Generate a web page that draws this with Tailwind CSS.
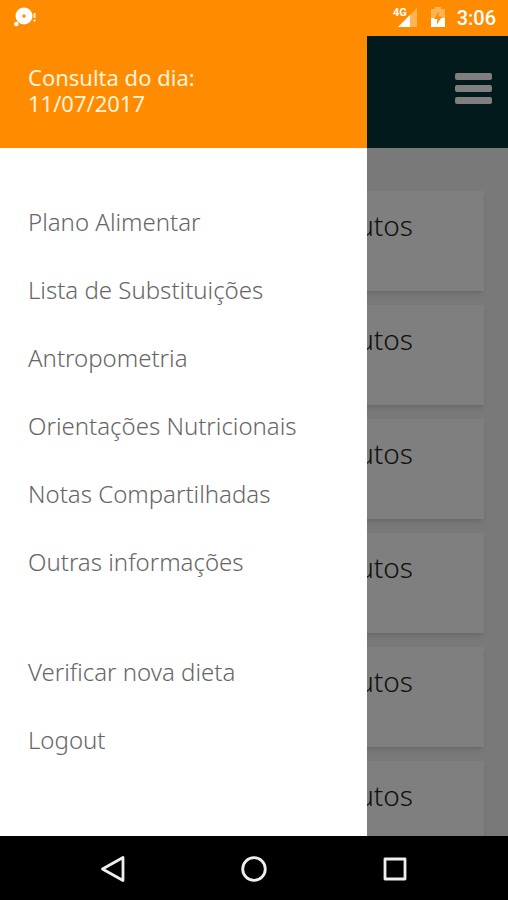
<!DOCTYPE html>
<html lang="pt-BR">

<head>
  <meta charset="UTF-8">
  <meta name="viewport" content="width=device-width, initial-scale=1.0">
  <title>Plano Alimentar</title>
  <script src="https://cdn.jsdelivr.net/npm/@tailwindcss/browser@4"></script>
</head>

<body class="flex h-screen flex-col overflow-hidden bg-black font-['Noto_Sans',sans-serif]">
  <!-- Status bar -->
  <div class="flex h-9 shrink-0 items-center justify-between bg-[#ff8c00] px-3 text-white">
    <svg class="h-6 w-7" viewBox="0 0 28 24" fill="none">
      <circle cx="12" cy="10" r="8.5" fill="#fff" />
      <circle cx="12" cy="10" r="1.7" fill="#ff8c00" />
      <circle cx="4.3" cy="18" r="2.3" fill="#fff" />
      <path d="M22.5 7v5M22.5 13.5v2" stroke="#fff0dc" stroke-width="2" />
    </svg>
    <div class="flex items-center gap-2">
      <svg class="h-6 w-7 overflow-visible" viewBox="0 0 28 24">
        <path d="M24 2v19H5z" fill="#ffb455" />
        <path d="M17 9v12H5z" fill="#fff" />
        <rect x="0" y="0" width="13" height="11" fill="#ff8c00" />
        <text x="0" y="10" font-size="11" font-weight="700" font-family="Roboto, sans-serif" fill="#fff">4G</text>
      </svg>
      <svg class="h-6 w-5" viewBox="0 0 20 24">
        <path d="M6 3V1h6v2h4v9H2V3z" fill="#ffb455" />
        <path d="M2 12h14v9H2z" fill="#fff" />
        <path d="M10 5l-5 8h3.500l-1 6 5.500-8.500H9.500z" fill="#ff8c00" />
      </svg>
      <span class="font-['Roboto',sans-serif] text-xl font-medium">3:06</span>
    </div>
  </div>

  <div class="relative min-h-0 flex-1 overflow-hidden bg-[#f3f3f3]">
    <!-- App bar -->
    <header class="flex h-28 items-center justify-end bg-[#043436] px-4 pb-2">
      <button type="button" aria-label="Menu" class="flex flex-col gap-[5px]">
        <span class="h-[7px] w-[37px] rounded-xs bg-white"></span>
        <span class="h-[7px] w-[37px] rounded-xs bg-white"></span>
        <span class="h-[7px] w-[37px] rounded-xs bg-white"></span>
      </button>
    </header>

    <!-- Cards -->
    <main class="flex flex-col gap-[14px] px-6 pt-[43px] text-right text-[28px] font-light leading-9 text-[#222]">
      <article class="h-[100px] shrink-0 bg-white pr-[71px] pt-4 shadow-md">minutos</article>
      <article class="h-[100px] shrink-0 bg-white pr-[71px] pt-4 shadow-md">minutos</article>
      <article class="h-[100px] shrink-0 bg-white pr-[71px] pt-4 shadow-md">minutos</article>
      <article class="h-[100px] shrink-0 bg-white pr-[71px] pt-4 shadow-md">minutos</article>
      <article class="h-[100px] shrink-0 bg-white pr-[71px] pt-4 shadow-md">minutos</article>
      <article class="h-[100px] shrink-0 bg-white pr-[71px] pt-4 shadow-md">minutos</article>
    </main>

    <!-- Drawer over a dimmed page -->
    <div class="absolute inset-0 bg-black/50">
      <aside class="flex h-full w-[72.3%] flex-col bg-white">
        <div class="flex h-28 shrink-0 flex-col justify-center bg-[#ff8c00] pb-1 pl-7 text-[22px] leading-[26px] text-[#fff3dc]">
          <p>Consulta do dia:<br>11/07/2017</p>
        </div>
        <nav class="flex flex-col gap-[42px] pt-10 text-2xl font-light text-[#666]">
          <div class="flex flex-col">
            <a href="#" class="flex h-[68px] items-center pl-7">Plano Alimentar</a>
            <a href="#" class="flex h-[68px] items-center pl-7">Lista de Substituições</a>
            <a href="#" class="flex h-[68px] items-center pl-7">Antropometria</a>
            <a href="#" class="flex h-[68px] items-center pl-7">Orientações Nutricionais</a>
            <a href="#" class="flex h-[68px] items-center pl-7">Notas Compartilhadas</a>
            <a href="#" class="flex h-[68px] items-center pl-7">Outras informações</a>
          </div>
          <div class="flex flex-col">
            <a href="#" class="flex h-[68px] items-center pl-7">Verificar nova dieta</a>
            <a href="#" class="flex h-[68px] items-center pl-7">Logout</a>
          </div>
        </nav>
      </aside>
    </div>
  </div>

  <!-- Navigation bar -->
  <div class="grid h-16 shrink-0 grid-cols-3 place-items-center bg-black px-[42px] pb-0.5 pt-1">
    <button type="button" aria-label="Voltar">
      <svg class="size-7" viewBox="0 0 28 28" fill="none" stroke="#f1eeee" stroke-width="2.8" stroke-linejoin="round">
        <path d="M24 2.500v23L3.500 14z" />
      </svg>
    </button>
    <button type="button" aria-label="Início">
      <svg class="size-7" viewBox="0 0 28 28" fill="none" stroke="#f1eeee" stroke-width="2.8">
        <circle cx="14" cy="14" r="11.3" />
      </svg>
    </button>
    <button type="button" aria-label="Recentes">
      <svg class="size-7" viewBox="0 0 28 28" fill="none" stroke="#f1eeee" stroke-width="2.8" stroke-linejoin="round">
        <rect x="4" y="4" width="20" height="20" />
      </svg>
    </button>
  </div>
</body>

</html>
